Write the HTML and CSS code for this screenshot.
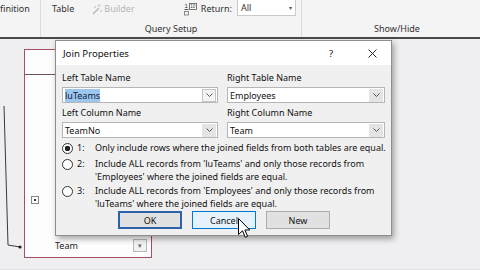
FILE: index.html
```html
<!DOCTYPE html>
<html lang="en">
<head>
  <meta charset="UTF-8">
  <meta name="viewport" content="width=device-width, initial-scale=1.0">
  <title>Join Properties</title>
  <link rel="stylesheet" href="styles.css">
</head>
<body>
  <!-- Ribbon (cut off at the top) -->
  <div class="ribbon">
    <div class="group group-def">
      <div class="group-row"><span class="cut">finition</span></div>
    </div>
    <div class="group group-setup">
      <div class="group-row">
        <span class="rb-btn">Table</span>
        <span class="rb-btn disabled">
          <svg width="12" height="12" viewBox="0 0 12 12">
            <path d="M2 11 L8 5" stroke="#b8b8b8" stroke-width="1.4"/>
            <path d="M8 1v3M6.5 2.5h3M4 3v2M3 4h2M10 7v2M9 8h2" stroke="#c4c4c4" stroke-width="0.8"/>
          </svg>Builder
        </span>
        <span class="rb-return">
          <svg width="14" height="14" viewBox="0 0 14 14">
            <text x="0.5" y="6" font-size="6" fill="#333" font-family="Liberation Sans, sans-serif">1</text>
            <path d="M0.5 7.5h4" stroke="#333" stroke-width="0.8"/>
            <rect x="5.5" y="1.5" width="7" height="6" fill="#fff" stroke="#555" stroke-width="0.8"/>
            <text x="6.3" y="6.3" font-size="4.5" fill="#333" font-family="Liberation Sans, sans-serif">10</text>
            <rect x="0.5" y="9.5" width="4" height="3.5" fill="none" stroke="#777" stroke-width="0.8"/>
          </svg>Return:
        </span>
        <span class="rb-combo">All<span class="rb-arrow">&#9662;</span></span>
      </div>
      <div class="group-label">Query Setup</div>
    </div>
    <div class="group group-show">
      <div class="group-row"></div>
      <div class="group-label">Show/Hide</div>
    </div>
  </div>

  <!-- Query design surface -->
  <div class="workspace">
    <svg class="join-line" width="30" height="220" viewBox="0 0 30 220">
      <polyline points="4,67 8,206 20,208" fill="none" stroke="#3a3a3a" stroke-width="1"/>
      <circle cx="20" cy="208" r="1.6" fill="#222"/>
    </svg>

    <div class="table-box">
      <div class="table-title"></div>
      <div class="table-fields">
        <span class="expand"></span>
      </div>
      <div class="table-row">
        <span>Team</span>
        <span class="mini-drop">&#9662;</span>
      </div>
    </div>

    <div class="dialog">
      <div class="dialog-title">
        <span class="title">Join Properties</span>
        <span class="help">?</span>
        <span class="close">
          <svg width="9" height="9" viewBox="0 0 9 9">
            <path d="M0.5 0.5 L8.5 8.5 M8.5 0.5 L0.5 8.5" stroke="#222" stroke-width="1"/>
          </svg>
        </span>
      </div>
      <div class="dialog-body">
        <div class="fields">
          <div class="field">
            <div class="label">Left Table Name</div>
            <div class="combo">
              <span class="combo-text"><span class="sel">luTeams</span></span>
              <span class="drop drop-hover"><svg width="7" height="4" viewBox="0 0 7 4"><polyline points="0.5,0.5 3.5,3.5 6.5,0.5" fill="none" stroke="#555"/></svg></span>
            </div>
          </div>
          <div class="field">
            <div class="label">Right Table Name</div>
            <div class="combo">
              <span class="combo-text">Employees</span>
              <span class="drop"><svg width="7" height="4" viewBox="0 0 7 4"><polyline points="0.5,0.5 3.5,3.5 6.5,0.5" fill="none" stroke="#555"/></svg></span>
            </div>
          </div>
          <div class="field">
            <div class="label">Left Column Name</div>
            <div class="combo">
              <span class="combo-text">TeamNo</span>
              <span class="drop"><svg width="7" height="4" viewBox="0 0 7 4"><polyline points="0.5,0.5 3.5,3.5 6.5,0.5" fill="none" stroke="#555"/></svg></span>
            </div>
          </div>
          <div class="field">
            <div class="label">Right Column Name</div>
            <div class="combo">
              <span class="combo-text">Team</span>
              <span class="drop"><svg width="7" height="4" viewBox="0 0 7 4"><polyline points="0.5,0.5 3.5,3.5 6.5,0.5" fill="none" stroke="#555"/></svg></span>
            </div>
          </div>
        </div>

        <div class="option opt-1">
          <span class="radio checked"></span>
          <span class="num">1:</span>
          <span class="opt-text">Only include rows where the joined fields from both tables are equal.</span>
        </div>
        <div class="option opt-2">
          <span class="radio"></span>
          <span class="num">2:</span>
          <span class="opt-text">Include ALL records from 'luTeams' and only those records from<br>'Employees' where the joined fields are equal.</span>
        </div>
        <div class="option opt-3">
          <span class="radio"></span>
          <span class="num">3:</span>
          <span class="opt-text">Include ALL records from 'Employees' and only those records from<br>'luTeams' where the joined fields are equal.</span>
        </div>

        <div class="buttons">
          <button class="btn btn-default">OK</button>
          <button class="btn btn-hover">Cancel</button>
          <button class="btn">New</button>
        </div>
      </div>
    </div>

    <svg class="cursor" width="13" height="21" viewBox="0 0 13 21">
      <path d="M0.5 0.5 L0.5 16.5 L4.5 12.8 L7.3 19.3 L9.6 18.3 L6.9 12 L11.8 12 Z" fill="#fff" stroke="#000" stroke-width="1" stroke-linejoin="round"/>
    </svg>
  </div>
</body>
</html>
```

FILE: styles.css
```css
* {
  box-sizing: border-box;
}

body {
  margin: 0;
  width: 480px;
  height: 270px;
  overflow: hidden;
  display: flex;
  flex-direction: column;
  font-family: "Noto Sans", "Open Sans", sans-serif;
  font-size: 9px;
  color: #1a1a1a;
  background-color: #efeff1;
}

/* Ribbon */
.ribbon {
  flex: none;
  height: 39px;
  display: flex;
  overflow: hidden;
  background-color: #f4f4f4;
  border-bottom: 2px solid #4a4a4a;
}

.group {
  flex: none;
  display: flex;
  flex-direction: column;
  justify-content: space-between;
  border-right: 1px solid #dcdcdc;
}

.group-def { width: 41px; overflow: hidden; }
.group-setup { width: 261px; }
.group-show { width: 190px; border-right: none; }

.group-row {
  height: 17px;
  display: flex;
  align-items: center;
  white-space: nowrap;
}

.group-label {
  height: 14px;
  line-height: 12px;
  text-align: center;
  color: #333;
}

.cut {
  color: #333;
}

.group-setup .group-row {
  padding-left: 11px;
}

.rb-btn {
  display: flex;
  align-items: center;
  color: #333;
}

.rb-btn.disabled {
  margin-left: 17px;
  color: #b4b4b4;
}

.rb-btn.disabled svg {
  margin-right: 1px;
}

.rb-return {
  margin-left: auto;
  display: flex;
  align-items: center;
  gap: 3px;
  color: #333;
}

.rb-combo {
  align-self: flex-start;
  width: 59px;
  height: 17px;
  margin: -1px 5px 0 5px;
  padding-left: 3px;
  display: flex;
  align-items: center;
  background-color: #fff;
  border: 1px solid #cacaca;
  color: #333;
}

.rb-arrow {
  margin-left: auto;
  margin-right: 3px;
  font-size: 6px;
  color: #555;
}

/* Design surface */
.workspace {
  flex: 1;
  position: relative;
  background-color: #efeff1;
  border-bottom: 1px solid #e2e2e6;
}

.join-line {
  position: absolute;
  left: 0;
  top: 0;
}

.table-box {
  position: absolute;
  left: 24px;
  top: 10px;
  width: 128px;
  height: 209px;
  display: flex;
  flex-direction: column;
  background-color: #fdfdfd;
  border: 1px solid #a84d66;
}

.table-title {
  height: 25px;
  flex: none;
  border-bottom: 1px solid #6e5258;
}

.table-fields {
  flex: 1;
  display: flex;
  align-items: flex-end;
  padding: 0 0 34px 6px;
}

.expand {
  width: 8px;
  height: 8px;
  border: 1px solid #8a8a8a;
  background: radial-gradient(circle, #333 0 1px, transparent 1.5px);
}

.table-row {
  height: 15px;
  flex: none;
  margin-bottom: 4px;
  padding: 0 4px 0 30px;
  display: flex;
  align-items: center;
  justify-content: space-between;
  color: #222;
}

.mini-drop {
  width: 14px;
  height: 13px;
  display: flex;
  align-items: center;
  justify-content: center;
  font-size: 7px;
  color: #666;
  background-color: #f2f2f2;
  border: 1px solid #b8b8b8;
}

/* Join Properties dialog */
.dialog {
  position: absolute;
  left: 55px;
  top: 1px;
  width: 337px;
  height: 196px;
  display: flex;
  flex-direction: column;
  background-color: #f0f0f0;
  border: 1px solid #8e8e8e;
  box-shadow: 2px 3px 6px rgba(0, 0, 0, 0.35);
}

.dialog-title {
  height: 24px;
  flex: none;
  display: flex;
  align-items: center;
  padding-left: 7px;
  background-color: #fff;
  font-size: 9.6px;
  color: #111;
}

.dialog-title .title {
  flex: 1;
}

.help {
  width: 14px;
  margin-right: 15px;
  text-align: center;
}

.close {
  width: 38px;
  display: flex;
  justify-content: center;
}

.dialog-body {
  flex: 1;
  padding: 7px 5px 0 6px;
  color: #111;
}

.fields {
  display: grid;
  grid-template-columns: 156px 158px;
  column-gap: 9px;
  row-gap: 4px;
}

.label {
  line-height: 12px;
}

.combo {
  height: 16px;
  margin-top: 3px;
  display: flex;
  align-items: center;
  padding-right: 1px;
  background-color: #fff;
  border: 1px solid #b6b6b6;
}

.combo-text {
  flex: 1;
  padding-left: 2px;
  line-height: 13px;
}

.sel {
  background-color: #9cc6ee;
  color: #0c1c3c;
}

.drop {
  width: 14px;
  height: 13px;
  display: flex;
  align-items: center;
  justify-content: center;
  background-color: #e4e4e4;
}

.drop-hover {
  background-color: #f4f4f4;
  border: 1px solid #c4c4c4;
}

.option {
  display: grid;
  grid-template-columns: 11px 14px 1fr;
  column-gap: 4px;
  line-height: 13px;
  white-space: nowrap;
}

.opt-1 { margin-top: 3px; }
.opt-2 { margin-top: 3px; }
.opt-3 { margin-top: 1px; }

.radio {
  width: 11px;
  height: 11px;
  margin-top: 2px;
  border: 1px solid #333;
  border-radius: 50%;
  background-color: #fff;
}

.radio.checked {
  background: radial-gradient(circle, #222 0 2.6px, #fff 3px);
}

.buttons {
  margin-top: 1px;
  display: flex;
  justify-content: center;
  gap: 10px;
}

.btn {
  width: 64px;
  height: 18px;
  padding: 0;
  font: inherit;
  color: #111;
  background-color: #e1e1e1;
  border: 1px solid #adadad;
}

.btn-default {
  border: 2px solid #2d63a8;
}

.btn-hover {
  background-color: #e5f1fb;
  border: 1px solid #0078d7;
}

.cursor {
  position: absolute;
  left: 238px;
  top: 179px;
}
```
